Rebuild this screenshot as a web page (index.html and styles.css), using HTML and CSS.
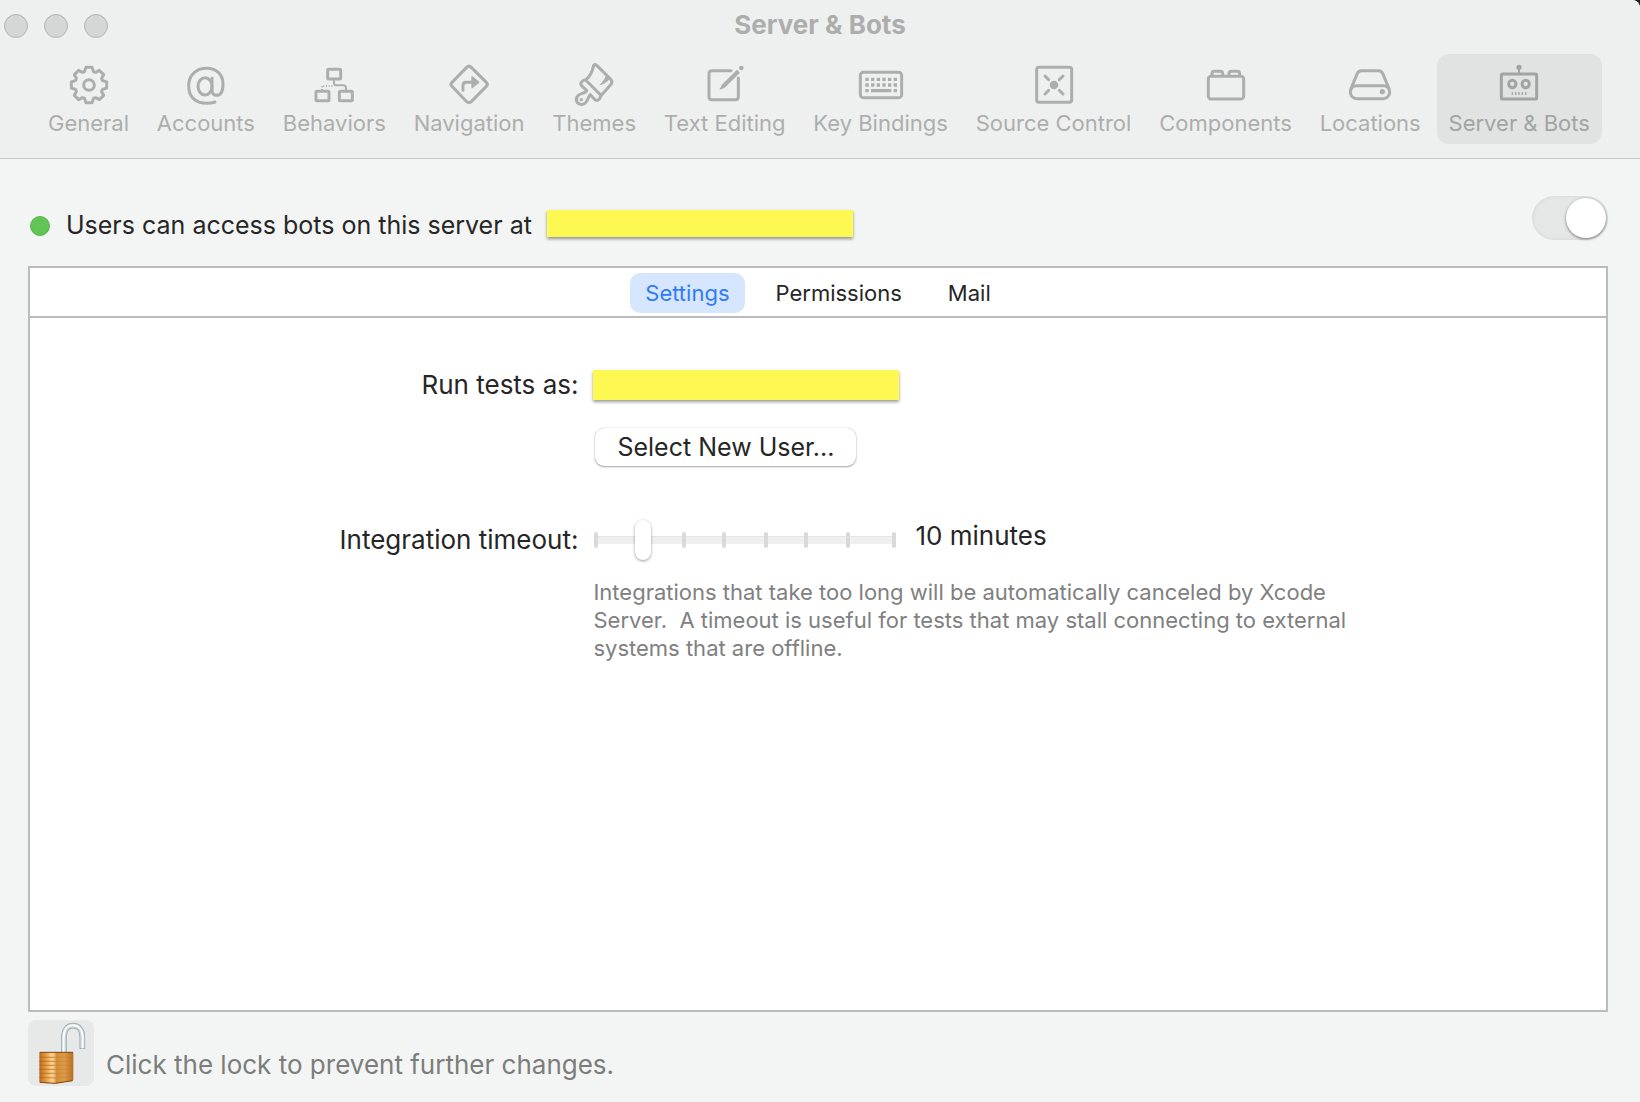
FILE: index.html
```html
<!DOCTYPE html>
<html lang="en">
<head>
<meta charset="utf-8">
<title>Server &amp; Bots</title>
<link rel="stylesheet" href="styles.css">
</head>
<body>
<div class="window">
  <header class="header">
    <div class="titlebar">
      <div class="lights">
        <button class="light" type="button" aria-label="Close"></button>
        <button class="light" type="button" aria-label="Minimize"></button>
        <button class="light" type="button" aria-label="Zoom"></button>
      </div>
      <h1 class="title">Server &amp; Bots</h1>
    </div>
    <nav class="toolbar">
      <button class="tool" type="button">
        <svg class="icon" viewBox="-72 -72 144 144"><path d="M-9-53H9L13-41Q16-38 20-38L31-44 44-31 38-20Q38-16 41-13L53-9V9L41 13Q38 16 38 20L44 31 31 44 20 38Q16 38 13 41L9 53H-9L-13 41Q-16 38-20 38L-31 44-44 31-38 20Q-38 16-41 13L-53 9V-9L-41-13Q-38-16-38-20L-44-31-31-44-20-38Q-16-38-13-41Z"/><circle r="16"/></svg>
        <span>General</span>
      </button>
      <button class="tool" type="button">
        <svg class="icon" viewBox="548 183 144 144"><path d="M647 306Q636 310 622 310C588 310 568 290 568 257C568 226 590 205 622 205C652 205 671 224 671 252C671 274 664 286 652 286C643 286 638 280 638 270V234"/><ellipse cx="617" cy="259" rx="21" ry="26"/></svg>
        <span>Accounts</span>
      </button>
      <button class="tool" type="button">
        <svg class="icon" viewBox="930 183 144 144"><rect x="983" y="208" width="39" height="29" rx="3"/><rect x="948" y="274" width="39" height="28" rx="3"/><rect x="1018" y="274" width="39" height="28" rx="3"/><path class="thin" d="M1002 238V250Q1002 256 1009 256H1030Q1038 256 1038 264V272"/><path class="thin" stroke-dasharray="3 5" d="M966 270V258H1000"/></svg>
        <span>Behaviors</span>
      </button>
      <button class="tool" type="button">
        <svg class="icon" viewBox="160 63 144 144"><path d="M225 82Q232 75 239 82L284 127Q290 133 284 139L239 185Q232 191 225 185L181 139Q174 133 181 127Z"/><path d="M214 151V136Q214 127 223 127H240"/><path class="solid" d="M239 111Q239 107 243 109L261 124Q264 127 261 130L243 144Q239 146 239 142Z"/></svg>
        <span>Navigation</span>
      </button>
      <button class="tool" type="button">
        <svg class="icon" viewBox="537 63 144 144"><path d="M608 76C604 96 598 108 586 118L576 122Q566 128 571 136L587 152C584 160 566 160 560 168Q552 178 559 188Q570 198 582 190C590 184 592 170 598 164L612 179Q620 184 625 177L631 166L659 134Q666 126 660 119L618 77Q612 71 608 76ZM584 120L630 166"/><path class="solid" d="M624 136Q640 122 646 104L657 116Q642 133 624 136Z"/><circle class="solid" cx="571" cy="179" r="5"/></svg>
        <span>Themes</span>
      </button>
      <button class="tool" type="button">
        <svg class="icon" viewBox="931 63 144 144"><path d="M1021 92H964Q955 92 955 101V170Q955 179 964 179H1034Q1043 179 1043 170V114"/><path class="solid" d="M986 150L993 135L1039 89L1048 98L1002 143Z"/><circle class="solid" cx="1052" cy="84" r="7"/></svg>
        <span>Text Editing</span>
      </button>
      <button class="tool" type="button">
        <svg class="icon" viewBox="198 63 144 144"><rect x="208" y="97" width="124" height="76" rx="9"/><path class="flat" stroke-width="10" stroke-dasharray="10 7" d="M223 118H319M223 135H319"/><path class="flat" stroke-width="10" d="M223 152H233M240 152H301M308 152H318"/></svg>
        <span>Key Bindings</span>
      </button>
      <button class="tool" type="button">
        <svg class="icon" viewBox="717 63 144 144"><rect x="737" y="82" width="105" height="105" rx="7"/><circle class="solid" cx="789" cy="135" r="13"/><path d="M762 108L773 119M816 108L805 119M762 162L773 151M816 162L805 151"/></svg>
        <span>Source Control</span>
      </button>
      <button class="tool" type="button">
        <svg class="icon" viewBox="183 183 144 144"><rect x="202" y="229" width="106" height="68" rx="8"/><path d="M213 226V221Q213 214 220 214H238Q245 214 245 221V226M264 226V221Q264 214 271 214H289Q296 214 296 221V226"/></svg>
        <span>Components</span>
      </button>
      <button class="tool" type="button">
        <svg class="icon" viewBox="612 183 144 144"><path d="M627 266L646 220Q650 212 659 212H709Q718 212 722 220L741 266"/><rect x="625" y="257" width="118" height="39" rx="19"/><circle class="solid" cx="721" cy="275" r="8"/></svg>
        <span>Locations</span>
      </button>
      <button class="tool tool-selected" type="button" aria-current="page">
        <svg class="icon" viewBox="1062 183 144 144"><rect x="1081" y="222" width="106" height="75" rx="4"/><path class="thin" d="M1134 202V222"/><circle class="solid" cx="1134" cy="202" r="8"/><circle cx="1114" cy="252" r="11"/><circle cx="1154" cy="252" r="11"/><path class="flat" stroke-width="4" d="M1114 276V285M1124 276V285M1134 276V285M1144 276V285M1154 276V285"/></svg>
        <span>Server &amp; Bots</span>
      </button>
    </nav>
  </header>

  <main class="content">
    <div class="status">
      <span class="dot"></span>
      <label class="status-text" for="server-switch">Users can access bots on this server at</label>
      <span class="redacted redacted-address"></span>
      <input class="switch" id="server-switch" type="checkbox" role="switch" checked>
    </div>

    <section class="panel">
      <div class="tabs" role="tablist">
        <button class="tab tab-selected" type="button" role="tab" aria-selected="true">Settings</button>
        <button class="tab" type="button" role="tab" aria-selected="false">Permissions</button>
        <button class="tab" type="button" role="tab" aria-selected="false">Mail</button>
      </div>
      <form class="form">
        <span class="label">Run tests as:</span>
        <span class="redacted redacted-user"></span>

        <button class="select-user" type="button">Select New User...</button>

        <label class="label" for="timeout">Integration timeout:</label>
        <div class="timeout">
          <div class="slider">
            <svg class="track" viewBox="0 0 304 40"><path fill="#efefef" d="M2 16H302V24H2Z"/><path fill="#e6e6e6" d="M2 16H302V17H2Z"/><path stroke="#d9d9d9" stroke-width="4" stroke-linecap="round" d="M3 14V26M91 14V26M131 14V26M173 14V26M213 14V26M255 14V26M301 14V26"/></svg>
            <input class="range" id="timeout" type="range" min="0" max="7" value="1">
          </div>
          <output class="value" for="timeout">10 minutes</output>
        </div>

        <p class="help">Integrations that take too long will be automatically canceled by Xcode<br>Server.&nbsp; A timeout is useful for tests that may stall connecting to external<br>systems that are offline.</p>
      </form>
    </section>

    <footer class="footer">
      <button class="lock" id="lock" type="button" aria-label="Lock">
        <svg class="lock-icon" viewBox="24 30 198 198">
          <defs>
            <linearGradient id="left" x1="0" x2="1"><stop offset="0" stop-color="#b8691c"/><stop offset=".45" stop-color="#e8a04a"/><stop offset=".8" stop-color="#ffd68e"/><stop offset="1" stop-color="#eeb060"/></linearGradient>
            <linearGradient id="right" x1="0" x2="1"><stop offset="0" stop-color="#d18a36"/><stop offset=".5" stop-color="#dc9a48"/><stop offset="1" stop-color="#b9701f"/></linearGradient>
          </defs>
          <g fill="none">
            <path stroke="#97a4aa" stroke-width="17" d="M132 126V82C132 58 143 47 159 47C176 47 187 60 187 82V117"/>
            <path stroke="#c9d2d6" stroke-width="13" d="M132 126V82C132 58 143 47 159 47C176 47 187 60 187 82V115"/>
            <path stroke="#fbfdfd" stroke-width="6" d="M131 126V82C131 58 143 46 159 46C177 46 188 60 188 82V115"/>
          </g>
          <path fill="url(#left)" d="M58 129Q58 126 62 126H106V221L62 218Q58 217 58 214Z"/>
          <path fill="url(#right)" d="M106 126H156Q160 126 160 130V208Q160 212 156 213L106 221Z"/>
          <path stroke="#a85c14" stroke-opacity=".6" stroke-width="3" fill="none" d="M58 142H106M58 154H106M58 166H106M58 178H106M58 190H106M58 202L106 204"/>
          <path stroke="#b06a20" stroke-opacity=".35" stroke-width="2" fill="none" d="M106 142H160M106 154H160M106 166H160M106 179L160 177M106 191L160 188M106 204L160 199"/>
          <path stroke="#8a4510" stroke-width="3" fill="none" d="M59 127H159M59 217L106 220L158 212"/>
        </svg>
      </button>
      <label class="footer-text" for="lock">Click the lock to prevent further changes.</label>
    </footer>
  </main>
</div>
</body>
</html>
```
FILE: styles.css
```css
* {
  box-sizing: border-box;
}

body {
  margin: 0;
  background: #1c1c1c;
  color: #262626;
  font-family: Inter, "Liberation Sans", sans-serif;
  font-size: 26px;
  line-height: 32px;
}

button,
input {
  margin: 0;
  padding: 0;
  border: 0;
  font: inherit;
  color: inherit;
  background: none;
}

.window {
  display: flex;
  flex-direction: column;
  min-height: 100vh;
  border-top-right-radius: 8px;
  background: #f3f5f4;
  overflow: hidden;
}

.header {
  padding-bottom: 14px;
  border-bottom: 1px solid #c8cac9;
  background: #eef0ef;
  color: #acaead;
}

.titlebar {
  display: grid;
  grid-template-columns: 1fr auto 1fr;
  align-items: center;
  height: 52px;
  padding: 0 4px;
}

.lights {
  display: flex;
  gap: 16px;
}

.light {
  width: 24px;
  height: 24px;
  border: 1px solid #b2b3b2;
  border-radius: 50%;
  background: #d5d7d6;
}

.title {
  margin: 0 0 2px;
  font-size: 26px;
  line-height: 32px;
  font-weight: 700;
}

.toolbar {
  display: flex;
  justify-content: space-between;
  padding: 2px 38px 0 36px;
}

.tool {
  display: flex;
  flex-direction: column;
  align-items: center;
  padding: 7px 12px;
  border-radius: 12px;
  font-size: 22px;
  line-height: 28px;
  white-space: nowrap;
}

.tool-selected {
  background: #e1e3e2;
  color: #a2a4a3;
}

.icon {
  width: 48px;
  height: 48px;
  fill: none;
  stroke: currentColor;
  stroke-width: 9;
  stroke-linecap: round;
  stroke-linejoin: round;
}

.icon .thin {
  stroke-width: 6;
  stroke-linecap: butt;
}

.icon .flat {
  stroke-linecap: butt;
}

.icon .solid {
  fill: currentColor;
  stroke: none;
}

.content {
  display: flex;
  flex: 1;
  flex-direction: column;
  padding: 37px 32px 16px 28px;
}

.status {
  display: flex;
  align-items: center;
  height: 44px;
  margin: 0 0 26px 2px;
  font-size: 25px;
}

.dot {
  width: 20px;
  height: 20px;
  margin-top: 16px;
  border: 1px solid #57b74c;
  border-radius: 50%;
  background: #61c555;
}

.status-text {
  margin: 14px 15px 0 16px;
}

.redacted {
  width: 306px;
  background: #fef852;
  box-shadow: 0 2px 3px rgba(0, 0, 0, 0.4);
}

.redacted-address {
  height: 27px;
  margin-top: 10px;
}

.redacted-user {
  height: 30px;
}

.switch {
  appearance: none;
  display: flex;
  justify-content: flex-end;
  align-items: center;
  width: 76px;
  height: 44px;
  margin-left: auto;
  padding: 2px;
  border-radius: 22px;
  background: #e5e7e6;
  box-shadow: inset 0 0 4px rgba(0, 0, 0, 0.08);
}

.switch::before {
  content: "";
  width: 40px;
  height: 40px;
  border-radius: 50%;
  background: #fff;
  box-shadow: 0 1px 3px rgba(0, 0, 0, 0.5);
}

.panel {
  flex: 1;
  border: 2px solid #bbb;
  background: #fff;
}

.tabs {
  display: flex;
  justify-content: center;
  align-items: center;
  gap: 16px;
  height: 50px;
  padding-top: 2px;
  border-bottom: 2px solid #bbb;
}

.tab {
  height: 40px;
  padding: 0 15px;
  border-radius: 10px;
  font-size: 22px;
  line-height: 28px;
}

.tab-selected {
  background: #d6e6fe;
  color: #307bf6;
}

.form {
  display: grid;
  grid-template-columns: 13fr 24fr;
  column-gap: 15px;
  align-items: center;
  padding-top: 51px;
}

.label {
  justify-self: end;
}

.select-user {
  grid-column: 2;
  justify-self: start;
  height: 38px;
  margin: 27px 0 54px 2px;
  padding: 0 22px;
  border-radius: 9px;
  background: #fff;
  box-shadow: 0 1px 2px rgba(0, 0, 0, 0.35), 0 0 1px rgba(0, 0, 0, 0.3);
  font-size: 25px;
  line-height: 36px;
}

.timeout {
  display: flex;
  align-items: flex-start;
  gap: 18px;
}

.slider {
  display: grid;
  width: 304px;
  height: 40px;
}

.track,
.range {
  grid-area: 1 / 1;
  width: 304px;
  height: 40px;
}

.range {
  appearance: none;
}

.range::-webkit-slider-thumb {
  appearance: none;
  width: 16px;
  height: 40px;
  border-radius: 8px;
  background: #fff;
  box-shadow: 0 1px 3px rgba(0, 0, 0, 0.4);
}

.help {
  grid-column: 2;
  margin: 18px 0 0;
  color: #808080;
  font-size: 22px;
  line-height: 28px;
}

.footer {
  display: flex;
  align-items: center;
  gap: 12px;
  margin-top: 8px;
  color: #7b7d7c;
}

.lock {
  width: 66px;
  height: 66px;
  border-radius: 8px;
  background: #e7e9e8;
}

.lock-icon {
  display: block;
  width: 66px;
  height: 66px;
}

.footer-text {
  margin-top: 24px;
}
```
